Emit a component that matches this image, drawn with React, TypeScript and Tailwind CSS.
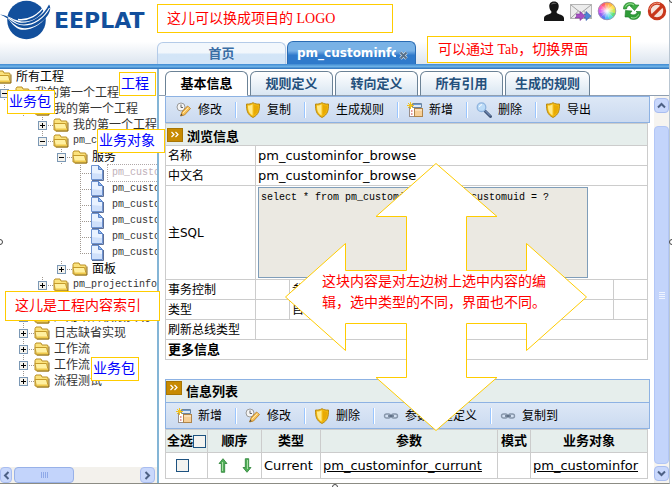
import React from 'react';

const uiFont = "font-['DejaVu_Sans','Noto_Sans_CJK_SC',sans-serif]";
const monoFont = "font-['Liberation_Mono','Noto_Sans_CJK_SC',monospace]";
const noteFont = "font-['Liberation_Serif','Noto_Sans_CJK_SC',serif]";

/* ---------- drawings ---------- */

function Logo() {
  return (
    <svg width="54" height="42" viewBox="0 0 54 42" className="shrink-0" aria-hidden="true">
      <circle cx="26.500" cy="20" r="19.300" fill="#124f9c" />
      <path d="M3 15.500C10 18 12 27 20 29.500 33 32 50 20 50.500 4L46 6C43 13 38 18 31 20.500 20 24 12 18 5 15z" fill="#fff" />
      <path d="M0 14.500C8 15 12 21 19 22.500 30 24 43 17 49 4.500 51 7 50.500 11 48 15 41 25 29 30 20 27.500 13 25.500 10 18 0 14.500z" fill="#124f9c" />
      <path d="M8 17.500C14 22 17 25 24 25 34 25 44 18 49.500 8" fill="none" stroke="#fff" strokeWidth="1.100" />
      <path d="M18 19.500C28 21 39 15 45 5" fill="none" stroke="#fff" strokeWidth="1.300" />
    </svg>
  );
}

function UserIcon() {
  return (
    <svg width="22" height="22" viewBox="0 0 22 22" aria-hidden="true">
      <path d="M11 1.500c3.500 0 5 2.500 4.700 5.300-.2 2-1 3.500-2 4.500v1.700c2 1.500 7 1.800 7.300 5V21H1v-3c.3-3.200 5.300-3.500 7.300-5v-1.700c-1-1-1.800-2.500-2-4.500C6 4 7.500 1.500 11 1.500z" fill="#161616" />
      <path d="M8 4.500c1-2 4-2.500 6-.5-2-.5-4 0-6 .5z" fill="#666" />
    </svg>
  );
}

function MailIcon() {
  return (
    <svg width="22" height="22" viewBox="0 0 22 22" aria-hidden="true">
      <rect x="0.500" y="4.500" width="21" height="14" fill="#ececec" stroke="#b5b5b5" />
      <path d="M1 5l10 8 10-8M1 18l7.500-7M21 18l-7.500-7" fill="none" stroke="#a3a3a3" />
      <path d="M6 14h4v-2.500l5 4.500-5 4.500V18H5c2-1 2-3 1-4z" fill="#a84fc4" stroke="#7a3496" strokeWidth=".6" />
      <path d="M14 14h2v-2.500l5 4.500-5 4.500V18h-2l2-2z" fill="#4d83d8" stroke="#2c5aa8" strokeWidth=".6" />
    </svg>
  );
}

function WheelIcon() {
  const colors = ['#ff9a4d', '#ffb83c', '#ffe04a', '#c8e84a', '#5fe07a', '#4fe0d8', '#4fb8f5', '#5a7af5', '#8b5cf0', '#d05cf0', '#ff5cb8', '#ff5d6a'];
  return (
    <svg width="20" height="22" viewBox="-10 -11 20 22" aria-hidden="true">
      <defs>
        <radialGradient id="wheelGlow">
          <stop offset="0" stopColor="#fff" />
          <stop offset="1" stopColor="#fff" stopOpacity="0" />
        </radialGradient>
      </defs>
      {colors.map((c, i) => (
        <path key={c} d="M0 0L-2.400 -8.700A9 9 0 0 1 2.400 -8.700z" fill={c} transform={`rotate(${i * 30})`} />
      ))}
      <circle r="7" fill="url(#wheelGlow)" />
      <circle r="8.800" fill="none" stroke="#9a8fb0" strokeWidth=".8" />
    </svg>
  );
}

function RefreshIcon() {
  return (
    <svg width="20" height="22" viewBox="0 0 20 22" aria-hidden="true">
      <path d="M1.500 8C2 4 5 2.500 8.500 2.500c2.500 0 4 .8 5 2.500H17l-4.500 5.500L8 5.800h2.200C8 4.800 5 5.500 4.500 9H1.500z" fill="#3fae45" stroke="#1c7a24" strokeWidth=".6" />
      <path d="M18.500 11.500c.3 4.500-2.500 8-7 8-2 0-4-.8-5-2.500H3l.5-6.500 6.500.5-2 2.500c2 2 5.500 2 7.500-1.500l-1.500-.5z" fill="#2f9c38" stroke="#1c7a24" strokeWidth=".6" />
      <path d="M3.500 6.500c1.500-3 6-3.500 8.500-1.500M9 17.500c3 1.200 6.500 0 7.500-3" fill="none" stroke="#a5e59b" />
    </svg>
  );
}

function StopIcon() {
  return (
    <svg width="20" height="22" viewBox="0 0 20 22" aria-hidden="true">
      <circle cx="10" cy="11" r="7.700" fill="#f6e4dd" stroke="#c8371c" strokeWidth="3" />
      <path d="M4.800 16.200L15.200 5.800" stroke="#c8371c" strokeWidth="3.200" />
      <path d="M2.500 9.500A7.800 7.800 0 0 1 13 3.600" fill="none" stroke="#f09a80" />
    </svg>
  );
}

function FolderIcon() {
  return (
    <svg className="shrink-0" width="16" height="14" viewBox="0 0 16 14" aria-hidden="true">
      <path d="M1 12V2.500L2 1h5l1 2h5.500l.5 1v8z" fill="#fbe27c" stroke="#b98f24" />
      <path d="M2.500 13L1 5.500h11.500l2 7.500z" fill="#fff0a0" stroke="#c49a2a" />
      <path d="M3 11.500h11" stroke="#efc94c" strokeWidth="2" />
      <path d="M15 4.500V13H3" fill="none" stroke="#8f6f1c" />
    </svg>
  );
}

function FileIcon() {
  return (
    <svg className="shrink-0" width="13" height="16" viewBox="0 0 13 16" aria-hidden="true">
      <path d="M1 15.500h11.500V5" fill="none" stroke="#5d6f96" />
      <path d="M.5.500h7l4 4v10H.5z" fill="#e9f2ff" stroke="#6f93d0" />
      <path d="M1 8l10 1v5H1z" fill="#cfe0fb" />
      <path d="M7.500.5v4h4z" fill="#8fb6f0" stroke="#5a84c8" />
    </svg>
  );
}

function PencilIcon() {
  return (
    <svg width="16" height="16" viewBox="0 0 16 16" aria-hidden="true">
      <circle cx="5" cy="5" r="4" fill="#f4f4f4" stroke="#9a9a9a" />
      <path d="M5 2.500v3h2" fill="none" stroke="#666" />
      <path d="M4.500 14l1.500-4L11.500 4l3 2.500L8.500 13z" fill="#f7c25a" stroke="#b87718" strokeWidth=".8" />
      <path d="M7 11l5.500-5.500" stroke="#fde9ad" />
      <path d="M4.500 14l.8-2.200 1.400 1.300z" fill="#444" />
    </svg>
  );
}

function ShieldIcon() {
  return (
    <svg width="16" height="16" viewBox="0 0 16 16" aria-hidden="true">
      <path d="M1.500 2C4 2.300 6 1.800 8 .700c2 1.100 4 1.600 6.500 1.300 0 6-.5 10.500-6.500 13.500C2 12.500 1.500 8 1.500 2z" fill="#f2b90f" stroke="#b88a14" />
      <path d="M3 3.500c2 0 3.500-.4 4.600-1.200v11.200C3.600 11 3 8 3 3.500z" fill="#ffe98a" />
      <path d="M9 3v10c3.500-2.300 4-5 4-9z" fill="#e8aa04" />
    </svg>
  );
}

function NewIcon() {
  return (
    <svg width="16" height="16" viewBox="0 0 16 16" aria-hidden="true">
      <rect x="2.500" y="3.500" width="7" height="11" fill="#fff" stroke="#9a8f8a" />
      <path d="M5.500 1.500h9v4h-9z" fill="#dfe9f4" stroke="#6b84a0" />
      <path d="M6 2.500h8" stroke="#6e9bd0" />
      <path d="M4 9h1.500M4 12h1.500" stroke="#c33" />
      <rect x="7.500" y="6.500" width="8" height="8" fill="#f6cf97" stroke="#b08448" />
      <path d="M8 8h7" stroke="#fff0d8" />
      <path d="M3.500 0v7M0 3.500h7M1 1l5 5M6 1L1 6" stroke="#f2c21c" />
    </svg>
  );
}

function SearchIcon() {
  return (
    <svg width="16" height="16" viewBox="0 0 16 16" aria-hidden="true">
      <path d="M9 9l5.500 5.500" stroke="#44597c" strokeWidth="3" strokeLinecap="round" />
      <path d="M9.500 9l4.500 4.500" stroke="#86a5d4" strokeLinecap="round" />
      <circle cx="5.500" cy="5.200" r="4.300" fill="#bcdcf8" stroke="#8fb4de" strokeWidth="1.300" />
      <path d="M3.500 5c.2-1.500 1-2.200 2.500-2.300" fill="none" stroke="#fff" />
    </svg>
  );
}

function LinkIcon() {
  return (
    <svg width="16" height="16" viewBox="0 0 16 16" aria-hidden="true">
      <rect x="1.500" y="6" width="6" height="4" rx="2" fill="none" stroke="#8796aa" strokeWidth="1.400" />
      <rect x="8.500" y="6" width="6" height="4" rx="2" fill="none" stroke="#8796aa" strokeWidth="1.400" />
      <path d="M5 8h6" stroke="#4c5d75" strokeWidth="1.300" />
    </svg>
  );
}

function SectionIcon() {
  return (
    <svg className="shrink-0" width="16" height="14" viewBox="0 0 16 14" aria-hidden="true">
      <rect x=".5" y=".5" width="15" height="13" fill="#c78a02" stroke="#a87604" />
      <path d="M4.500 4L7 6.500 4.500 9M8.500 4L11 6.500 8.500 9" fill="none" stroke="#fff" strokeWidth="1.200" />
    </svg>
  );
}

function ArrowIcon({ down = false }: { down?: boolean }) {
  return (
    <svg width="10" height="15" viewBox="0 0 10 15" aria-hidden="true" className={down ? 'rotate-180' : ''}>
      <path d="M5 .700L9 5.500H6.700v8.800H3.300V5.500H1z" fill="#4fae57" stroke="#2b8136" strokeWidth=".8" />
      <path d="M4.500 4v9" stroke="#a8e0a4" />
    </svg>
  );
}

function Chevron({ turn }: { turn: string }) {
  return (
    <svg width="9" height="9" viewBox="0 0 9 9" aria-hidden="true" className={turn}>
      <path d="M1 6.500L4.500 3 8 6.500" fill="none" stroke="#4d6185" strokeWidth="2" />
    </svg>
  );
}

/* ---------- tree ---------- */

type Node = { level: number; label: string; kind: 'root' | 'open' | 'closed' | 'file'; mono?: boolean; strong?: boolean; selected?: boolean; last?: boolean };

const nodes: Node[] = [
  { level: 0, label: '所有工程', kind: 'root', strong: true },
  { level: 1, label: '我的第一个工程', kind: 'open' },
  { level: 2, label: '我的第一个工程', kind: 'open' },
  { level: 3, label: '我的第一个工程', kind: 'closed' },
  { level: 3, label: 'pm_custominfor', kind: 'open', mono: true },
  { level: 4, label: '服务', kind: 'open', strong: true },
  { level: 5, label: 'pm_custominfor', kind: 'file', mono: true, selected: true },
  { level: 5, label: 'pm_custominfor', kind: 'file', mono: true },
  { level: 5, label: 'pm_custominfor', kind: 'file', mono: true },
  { level: 5, label: 'pm_custominfor', kind: 'file', mono: true },
  { level: 5, label: 'pm_custominfor', kind: 'file', mono: true },
  { level: 5, label: 'pm_custominfor', kind: 'file', mono: true, last: true },
  { level: 4, label: '面板', kind: 'closed', strong: true, last: true },
  { level: 3, label: 'pm_projectinfor', kind: 'closed', mono: true, last: true },
  { level: 2, label: '', kind: 'closed' },
  { level: 2, label: '应用缺省权限实现', kind: 'closed' },
  { level: 2, label: '日志缺省实现', kind: 'closed' },
  { level: 2, label: '工作流', kind: 'closed' },
  { level: 2, label: '工作流', kind: 'closed' },
  { level: 2, label: '流程测试', kind: 'closed', last: true },
];

const indents = ['-ml-[4px]', 'ml-0', 'ml-[19px]', 'ml-[38px]', 'ml-[57px]', 'ml-[76px]'];

function TreeRow({ node }: { node: Node }) {
  return (
    <li className={`flex h-4 items-center ${indents[node.level]}`}>
      {node.kind !== 'root' && (
        <svg className="shrink-0" width="15" height="16" viewBox="0 0 15 16" aria-hidden="true">
          <path d={node.last ? 'M4.500 0V8' : 'M4.500 0V16'} stroke="#a09890" strokeDasharray="1 1" />
          <path d="M4 8.500H15" stroke="#a09890" strokeDasharray="1 1" />
          {node.kind !== 'file' && (
            <>
              <rect x=".5" y="4.500" width="8" height="8" fill="#f4f2ec" stroke="#7b98b5" />
              <path d={node.kind === 'open' ? 'M2 8.500H7' : 'M2 8.500H7M4.500 6V11'} stroke="#000" />
            </>
          )}
        </svg>
      )}
      {node.kind === 'file' ? <FileIcon /> : <FolderIcon />}
      <span
        className={`ml-1 whitespace-nowrap leading-4 ${node.mono ? `${monoFont} text-[10px]` : 'text-xs'} ${
          node.selected ? 'outline-1 outline-dotted outline-[#b0a8a8] px-1 text-[#c0b0b8]' : node.strong ? 'text-black' : 'text-[#333]'
        } ${node.kind === 'file' && !node.selected ? 'pl-1' : ''}`}
      >
        {node.label}
      </span>
    </li>
  );
}

function Sidebar() {
  return (
    <nav aria-label="工程" className="flex w-[159px] shrink-0 flex-col overflow-hidden border-r-2 border-[#84b5d6]">
      <ul className="flex-1">
        {nodes.map((n, i) => (
          <TreeRow key={i} node={n} />
        ))}
      </ul>
      <div className="flex h-4 items-stretch bg-[#f3f1ec]">
        <button aria-label="向左" className="flex w-3 items-center justify-center rounded-sm border border-[#a9bdf0] bg-[#c9d8fc]">
          <Chevron turn="-rotate-90" />
        </button>
        <div className="ml-0.5 flex w-[60px] items-center justify-center gap-px rounded-sm border border-[#98b1e8] bg-[#c3d4fb]">
          {[0, 1, 2, 3].map((i) => (
            <i key={i} className="h-1.5 w-px bg-[#8fa9e8]" />
          ))}
        </div>
        <button aria-label="向右" className="mr-0.5 ml-auto flex w-[15px] items-center justify-center rounded-sm border border-[#a9bdf0] bg-[#c9d8fc]">
          <Chevron turn="rotate-90" />
        </button>
      </div>
    </nav>
  );
}

/* ---------- main area ---------- */

type Tool = { label: string; icon: React.ReactNode };

function Toolbar({ tools }: { tools: Tool[] }) {
  return (
    <div className="flex h-[27px] items-center overflow-hidden border border-[#8db2e3] bg-linear-to-b from-[#dde8f6] to-[#cbdaf0]">
      {tools.map((t, i) => (
        <React.Fragment key={t.label}>
          {i > 0 && <span className="h-4 w-0.5 shrink-0 border-l border-[#9ac6ff] bg-white" />}
          <button className="flex shrink-0 items-center gap-1.5 pr-[13px] pl-2 text-xs leading-4 whitespace-nowrap first:pl-[10px]">
            {t.icon}
            {t.label}
          </button>
        </React.Fragment>
      ))}
    </div>
  );
}

const formTools: Tool[] = [
  { label: '修改', icon: <PencilIcon /> },
  { label: '复制', icon: <ShieldIcon /> },
  { label: '生成规则', icon: <ShieldIcon /> },
  { label: '新增', icon: <NewIcon /> },
  { label: '删除', icon: <SearchIcon /> },
  { label: '导出', icon: <ShieldIcon /> },
];

const listTools: Tool[] = [
  { label: '新增', icon: <NewIcon /> },
  { label: '修改', icon: <PencilIcon /> },
  { label: '删除', icon: <ShieldIcon /> },
  { label: '参数批量定义', icon: <LinkIcon /> },
  { label: '复制到', icon: <LinkIcon /> },
];

const cell = 'h-5 border border-[#ccc] px-0.5 py-0 text-left align-middle leading-4 font-normal';
const headCell = 'h-[23px] border border-[#ccc] bg-[#e6eeec] p-0 text-center text-[13px] leading-4 font-bold whitespace-nowrap';

function InfoForm() {
  return (
    <table className="w-full table-fixed border-collapse text-xs">
      <colgroup>
        <col className="w-[90px]" />
        <col className="w-[34px]" />
        <col />
        <col className="w-[34px]" />
      </colgroup>
      <tbody>
        <tr>
          <th colSpan={4} className="h-[22px] border border-[#ccc] bg-[#e6eeec] p-0 text-left text-[13px] leading-4 font-bold">
            <span className="flex items-center gap-1 pl-px">
              <SectionIcon />
              <span className="pt-1">浏览信息</span>
            </span>
          </th>
        </tr>
        <tr>
          <th className={cell}>名称</th>
          <td colSpan={3} className={`${cell} text-[13px]`}>pm_custominfor_browse</td>
        </tr>
        <tr>
          <th className={cell}>中文名</th>
          <td colSpan={3} className={`${cell} text-[13px]`}>pm_custominfor_browse</td>
        </tr>
        <tr>
          <th className={cell}>
            <label htmlFor="sql">主SQL</label>
          </th>
          <td colSpan={3} className={cell}>
            <textarea
              id="sql"
              readOnly
              className={`my-px block h-[91px] w-[330px] resize-none border border-[#7f9db9] bg-[#ebe9e2] px-0.5 py-0.5 text-[10px] leading-[15px] outline-none ${monoFont}`}
              value="select * from pm_custominfor where customuid = ?"
            />
          </td>
        </tr>
        <tr>
          <th className={cell}>事务控制</th>
          <td className={cell} />
          <td className={cell}>参</td>
          <td className={cell} />
        </tr>
        <tr>
          <th className={cell}>类型</th>
          <td className={cell} />
          <td className={cell}>自</td>
          <td className={cell} />
        </tr>
        <tr>
          <th className={cell}>刷新总线类型</th>
          <td colSpan={3} className={cell} />
        </tr>
        <tr>
          <th colSpan={4} className="h-5 border border-[#ccc] px-0.5 py-0 text-left text-[13px] leading-4 font-bold">更多信息</th>
        </tr>
      </tbody>
    </table>
  );
}

const box = 'size-[13px] appearance-none border border-[#1d5280] bg-[#f3f3f0]';

function InfoList() {
  return (
    <table className="w-full table-fixed border-collapse text-[13px]">
      <colgroup>
        <col className="w-[42px]" />
        <col className="w-[54px]" />
        <col className="w-[59px]" />
        <col />
        <col className="w-[33px]" />
        <col className="w-[117px]" />
      </colgroup>
      <thead>
        <tr>
          <th className={headCell}>
            <label className="flex items-center justify-center">
              全选
              <input type="checkbox" className={box} />
            </label>
          </th>
          <th className={headCell}>顺序</th>
          <th className={headCell}>类型</th>
          <th className={headCell}>参数</th>
          <th className={headCell}>模式</th>
          <th className={headCell}>业务对象</th>
        </tr>
      </thead>
      <tbody>
        <tr className="h-[26px]">
          <td className="border border-[#ccc] p-0">
            <input type="checkbox" aria-label="选择" className={`${box} ml-[10px] block`} />
          </td>
          <td className="border border-[#ccc] p-0">
            <span className="flex justify-center gap-[14px]">
              <button aria-label="上移"><ArrowIcon /></button>
              <button aria-label="下移"><ArrowIcon down /></button>
            </span>
          </td>
          <td className="border border-[#ccc] px-0.5 py-0 leading-4">Current</td>
          <td className="border border-[#ccc] px-0.5 py-0 leading-4">
            <a href="#param" className="underline">pm_custominfor_currunt</a>
          </td>
          <td className="border border-[#ccc] p-0" />
          <td className="border border-[#ccc] px-0.5 py-0 leading-4">
            <a href="#object" className="underline">pm_custominfor</a>
          </td>
        </tr>
      </tbody>
    </table>
  );
}

function VerticalScroll() {
  return (
    <div className="flex w-[15px] shrink-0 flex-col bg-[#f6f4f0] pt-0.5">
      <button aria-label="向上" className="flex h-[15px] items-center justify-center rounded-sm border border-[#a9bdf0] bg-[#c9d8fc]">
        <Chevron turn="" />
      </button>
      <div className="mt-[13px] mb-0.5 flex flex-1 flex-col items-center justify-center gap-px rounded-sm border border-[#b2c6f6] bg-[#c3d4fb]">
        {[0, 1, 2, 3].map((i) => (
          <i key={i} className="h-px w-1.5 bg-[#eef3ff]" />
        ))}
      </div>
      <button aria-label="向下" className="mb-0.5 flex h-[15px] items-center justify-center rounded-sm border border-[#a9bdf0] bg-[#c9d8fc]">
        <Chevron turn="rotate-180" />
      </button>
    </div>
  );
}

const innerTabs = ['基本信息', '规则定义', '转向定义', '所有引用', '生成的规则'];

function Main() {
  return (
    <main className="flex min-w-0 flex-1 flex-col pt-0.5">
      <div role="tablist" className="flex gap-0.5 border-b border-[#8f9fb2] pl-[6px]">
        {innerTabs.map((t, i) => (
          <button
            key={t}
            role="tab"
            aria-selected={i === 0}
            className={`-mb-px h-[25px] rounded-t-md border border-[#6b8296] text-[13px] leading-4 font-bold whitespace-nowrap ${
              i === 4 ? 'w-[85px]' : 'w-[83px]'
            } ${i === 0 ? 'border-b-white bg-white text-black' : 'border-b-[#8f9fb2] bg-linear-to-b from-white to-[#d9e6f2] text-[#24507c]'}`}
          >
            {t}
          </button>
        ))}
      </div>
      <div className="flex flex-1">
        <div className="min-w-0 flex-1 pr-[4px] pb-1 pl-[6px]">
          <Toolbar tools={formTools} />
          <div className="pr-0.5">
            <InfoForm />
          </div>
          <section className="mt-[19px]">
            <h2 className="flex h-[23px] items-start gap-1 border border-b-0 border-[#8db2e3] bg-[#e6eeec] pt-px text-[13px] leading-[22px] font-bold">
              <SectionIcon />
              信息列表
            </h2>
            <Toolbar tools={listTools} />
            <div className="pr-0.5">
              <InfoList />
            </div>
          </section>
        </div>
        <VerticalScroll />
      </div>
    </main>
  );
}

/* ---------- header ---------- */

function Header() {
  return (
    <header>
      <div className="flex h-16 items-end bg-linear-to-b from-white from-65% to-[#dce5ef]">
        <div className="flex w-[157px] shrink-0 self-start text-[#124f9c]">
          <Logo />
          <span className="pt-[7px] font-['DejaVu_Sans',sans-serif] text-[22px] leading-7 font-bold">EEPLAT</span>
        </div>
        <div role="tablist" className="flex items-end gap-px">
          <button role="tab" aria-selected="false" className="h-[22px] w-[129px] rounded-t-md border border-b-0 border-[#b4cbe8] bg-linear-to-b from-[#f2f7fc] from-45% to-[#d3e5f7] to-55% text-[13px] leading-4 font-bold text-[#3a6ea5]">
            首页
          </button>
          <div className="flex h-[23px] w-[129px] items-center rounded-t-md border border-b-0 border-[#2a6cb4] bg-linear-to-b from-[#79b2e6] from-40% to-[#2f7acb] to-60% pl-[9px]">
            <button role="tab" aria-selected="true" className="w-[99px] overflow-hidden text-left text-xs leading-4 font-bold text-white">
              pm_custominfor
            </button>
            <button aria-label="关闭" className="ml-[3px] mt-1">
              <svg width="9" height="9" viewBox="0 0 9 9" aria-hidden="true">
                <path d="M1.500 1.500l6 6M7.500 1.500l-6 6" stroke="#cfdbe6" strokeWidth="3.200" />
                <path d="M1.500 1.500l6 6M7.500 1.500l-6 6" stroke="#566f88" strokeWidth="1.800" />
              </svg>
            </button>
          </div>
        </div>
        <div className="ml-auto flex items-center gap-[5px] self-start pr-0.5">
          <button aria-label="用户"><UserIcon /></button>
          <button aria-label="邮件"><MailIcon /></button>
          <button aria-label="主题"><WheelIcon /></button>
          <button aria-label="刷新"><RefreshIcon /></button>
          <button aria-label="退出"><StopIcon /></button>
        </div>
      </div>
      <div className="h-[5px] bg-linear-to-b from-[#3f8ad2] via-[#6bb0e6] to-[#2a6fb8]" />
    </header>
  );
}

/* ---------- annotations over the window ---------- */

function Note({ className, children }: { className: string; children: React.ReactNode }) {
  return (
    <p className={`absolute flex items-center border border-[#fc0] bg-white text-sm leading-5 whitespace-nowrap ${noteFont} ${className}`}>{children}</p>
  );
}

function Annotations() {
  return (
    <>
      <Note className="top-1 left-[157px] h-[29px] w-[236px] pl-[9px] text-[#f00]">这儿可以换成项目的 LOGO</Note>
      <Note className="top-9 left-[427px] h-[27px] w-[204px] pl-[10px] text-[#f00]">可以通过 Tab，切换界面</Note>
      <Note className="top-[72px] left-[119px] h-6 w-[37px] pl-px text-[#00f]">工程</Note>
      <Note className="top-[90px] left-[7px] h-6 w-12 pl-px text-[#00f]">业务包</Note>
      <Note className="top-[129px] left-[97px] h-6 w-[68px] pl-px text-[#00f]">业务对象</Note>
      <Note className="top-[291px] left-[5px] h-[30px] w-[155px] pl-[9px] text-[#f00]">这儿是工程内容索引</Note>
      <Note className="top-[357px] left-[91px] h-6 w-12 pl-px text-[#00f]">业务包</Note>
      <div className="absolute top-[162px] left-[284px] h-[270px] w-[304px]">
        <svg width="304" height="270" viewBox="284 162 304 270" aria-hidden="true">
          <path
            d="M436 163.500L497 216.500H466.500V270.500H526.500V243.500L586.500 297 526.500 350.500V323.500H466.500V377.500H497L436 430.500 376 377.500H406.500V323.500H345.500V350.500L285.500 297 345.500 243.500V270.500H406.500V216.500H376z"
            fill="#fff"
            stroke="#fc0"
          />
        </svg>
        <p className={`absolute top-[109px] left-[38px] w-[228px] text-sm leading-[21px] text-[#f00] ${noteFont}`}>
          这块内容是对左边树上选中内容的编辑，选中类型的不同，界面也不同。
        </p>
      </div>
      <i className="absolute top-[239px] -left-[3px] size-1.5 rounded-full border border-[#444] bg-white" />
      <i className="absolute top-[239px] -right-[3px] size-1.5 rounded-full border border-[#444] bg-white" />
      <i className="absolute -top-[3px] -right-[3px] size-1.5 rounded-full border border-[#444] bg-white" />
      <i className="absolute -bottom-[3px] left-[332px] size-1.5 rounded-full border border-[#444] bg-white" />
    </>
  );
}

export default function App() {
  return (
    <div className={`relative flex min-h-screen flex-col overflow-hidden bg-white pb-[3px] text-black ${uiFont}`}>
      <div className="mr-0.5 flex flex-1 flex-col border-r border-b border-r-[#b9c6d2] border-b-[#8c8c84]">
        <Header />
        <div className="flex flex-1">
          <Sidebar />
          <Main />
        </div>
      </div>
      <Annotations />
    </div>
  );
}
